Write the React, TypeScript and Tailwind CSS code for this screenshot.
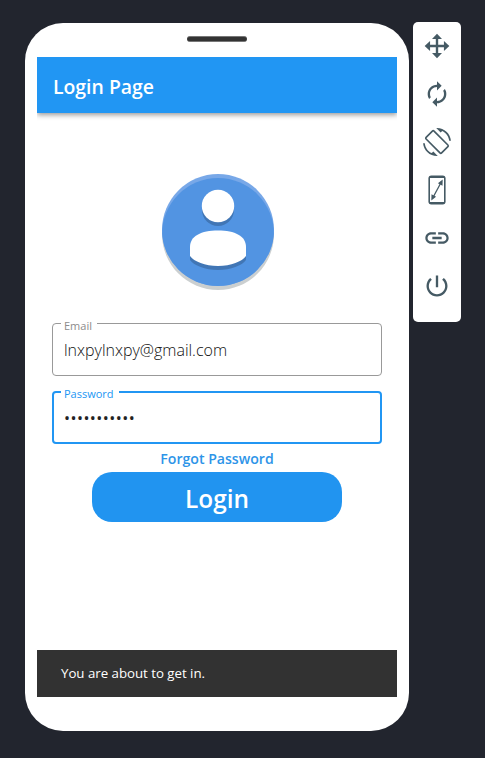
import React from "react";

const toolIcon = "h-7 w-7 fill-[#455a64]";

function MoveIcon() {
  return (
    <svg viewBox="0 0 24 24" className="h-[26px] w-[26px] fill-[#455a64]">
      <path d="M12 .6l4.600 5h-3.500v5.300h5.300V7.400L23.400 12l-5 4.600v-3.500h-5.300v5.300h3.500L12 23.400l-4.600-5h3.500v-5.300H5.600v3.500L.6 12l5-4.600v3.500h5.300V5.600H7.400z" />
    </svg>
  );
}

function RefreshIcon() {
  return (
    <svg viewBox="0 0 24 24" className={toolIcon}>
      <path d="M12 6v3l4-4-4-4v3c-4.42 0-8 3.58-8 8 0 1.57.46 3.03 1.24 4.26L6.7 14.8c-.45-.83-.7-1.79-.7-2.8 0-3.31 2.69-6 6-6zm6.76 1.740L17.3 9.2c.44.84.7 1.79.7 2.8 0 3.31-2.69 6-6 6v-3l-4 4 4 4v-3c4.42 0 8-3.58 8-8 0-1.57-.46-3.03-1.24-4.26z" />
    </svg>
  );
}

function RotateIcon() {
  return (
    <svg viewBox="0 0 24 24" className="h-[28px] w-[28px] fill-[#455a64]">
      <path d="M16.48 2.520c3.27 1.550 5.610 4.720 5.970 8.480h1.500C23.440 4.840 18.290 0 12 0l-.66.03 3.810 3.810 1.330-1.320zM7.520 21.480C4.250 19.940 1.910 16.760 1.550 13H.050C.56 19.160 5.710 24 12 24l.66-.03-3.810-3.810-1.330 1.320z" />
      <rect
        x="7.200"
        y="2.600"
        width="9.600"
        height="18.800"
        rx="1"
        transform="rotate(-45 12 12)"
        fill="none"
        stroke="#455a64"
        strokeWidth="1.4"
      />
    </svg>
  );
}

function ResizeIcon() {
  return (
    <svg viewBox="0 0 18 30" className="h-[30px] w-[18px]">
      <rect x="0.400" y="0.500" width="17.200" height="29" rx="3" fill="#455a64" />
      <rect x="2" y="3" width="14" height="24" fill="#fff" />
      <path d="M5.500 21.500L12.500 8.500" stroke="#455a64" strokeWidth="1.3" />
      <path d="M14.700 4.600l-.2 6.200-4.600-2.500zM3.300 25.400l.2-6.200 4.600 2.500z" fill="#455a64" />
    </svg>
  );
}

function LinkIcon() {
  return (
    <svg viewBox="0 0 24 24" className={toolIcon}>
      <path d="M3.900 12c0-1.710 1.390-3.100 3.100-3.100h4V7H7c-2.760 0-5 2.240-5 5s2.240 5 5 5h4v-1.900H7c-1.710 0-3.100-1.390-3.100-3.100zM8 13h8v-2H8v2zm9-6h-4v1.900h4c1.710 0 3.100 1.390 3.100 3.100s-1.390 3.100-3.100 3.100h-4V17h4c2.760 0 5-2.240 5-5s-2.240-5-5-5z" />
    </svg>
  );
}

function PowerIcon() {
  return (
    <svg viewBox="0 0 24 24" className={toolIcon}>
      <path d="M13 3h-2v10h2V3zm4.830 2.170l-1.420 1.420C17.990 7.860 19 9.810 19 12c0 3.870-3.130 7-7 7s-7-3.130-7-7c0-2.190 1.010-4.140 2.580-5.420L6.170 5.170C4.230 6.820 3 9.260 3 12c0 4.970 4.030 9 9 9s9-4.030 9-9c0-2.740-1.230-5.180-3.170-6.830z" />
    </svg>
  );
}

function Avatar() {
  const body =
    "M28 73C28 62 39 56.500 56 56.500S84 62 84 73v9c-4 5.500-15 10-28 10s-24-4.500-28-10z";
  return (
    <svg viewBox="0 0 112 116" className="ml-[2px] h-[116px] w-[112px]">
      <defs>
        <clipPath id="disc">
          <circle cx="56" cy="56" r="56" />
        </clipPath>
      </defs>
      <circle cx="56" cy="60" r="56" fill="#cbcfd0" />
      <circle cx="56" cy="56" r="56" fill="#78a8e8" />
      <g clipPath="url(#disc)">
        <circle cx="56" cy="60" r="56" fill="#5294e2" />
      </g>
      <g fill="#4176b5">
        <circle cx="56" cy="36" r="16" />
        <path d={body} transform="translate(0 4)" />
      </g>
      <g fill="#fff">
        <circle cx="56" cy="32" r="16.200" />
        <path d={body} />
      </g>
    </svg>
  );
}

const tools = [MoveIcon, RefreshIcon, RotateIcon, ResizeIcon, LinkIcon, PowerIcon];

export default function App() {
  return (
    <div className="flex h-[758px] w-[485px] items-start gap-1 overflow-hidden bg-[#22252e] pt-[22px] pl-[25px] font-['Open_Sans','Noto_Sans',sans-serif]">
      <div className="mt-px flex h-[708px] w-[384px] shrink-0 flex-col items-center rounded-[38px] bg-white">
        <div className="mt-[13px] h-[6px] w-[60px] shrink-0 rounded-[3px] border-y border-[#777] bg-[#333]" />
        <div className="mt-[15px] flex h-[640px] w-[360px] flex-col overflow-hidden bg-white">
          <header className="flex h-14 shrink-0 items-center bg-[#2196f3] px-4 pt-1 shadow-[0_2px_5px_rgba(0,0,0,0.4)]">
            <h1 className="text-[19.4px] leading-6 font-semibold whitespace-nowrap text-white">Login Page</h1>
          </header>
          <main className="flex flex-col items-center pt-[61px]">
            <Avatar />
            <div className="relative mt-[33px] h-[53px] w-[330px] rounded-[4px] border border-[#999]">
              <span className="absolute -top-[4px] left-[8px] bg-white pr-[5px] pl-[3px] text-[11px] leading-3 text-[#8c8c8c]">Email</span>
              <div className="pt-[15px] pl-[11px] text-base leading-[22px] font-light text-[#111]">lnxpylnxpy@gmail.com</div>
            </div>
            <div className="relative mt-[15px] h-[53px] w-[330px] rounded-[4px] border-2 border-[#2196f3]">
              <span className="absolute -top-[5px] left-[7px] bg-white pr-[5px] pl-[3px] text-[11px] leading-3 text-[#2196f3]">Password</span>
              <div className="pt-[14px] pl-[10px] text-base leading-[22px] tracking-[0.45px] text-[#222]">•••••••••••</div>
            </div>
            <a className="mt-[5px] text-[14.1px] leading-5 font-semibold whitespace-nowrap text-[#2d94e8]">Forgot Password</a>
            <button className="mt-[3px] h-[50px] w-[250px] rounded-[20px] bg-[#2194f0] pt-[3px] text-[24.4px] leading-8 font-semibold text-white">
              Login
            </button>
          </main>
          <footer className="mt-auto flex h-[47px] items-center bg-[#323232] px-6 pt-px text-[13.3px] font-medium tracking-[-0.03px] text-white">
            You are about to get in.
          </footer>
        </div>
      </div>
      <aside className="flex h-[300px] w-12 shrink-0 flex-col rounded-[5px] bg-white">
        {tools.map((Icon, i) => (
          <div key={i} className="flex h-12 items-center justify-center">
            <Icon />
          </div>
        ))}
      </aside>
    </div>
  );
}
